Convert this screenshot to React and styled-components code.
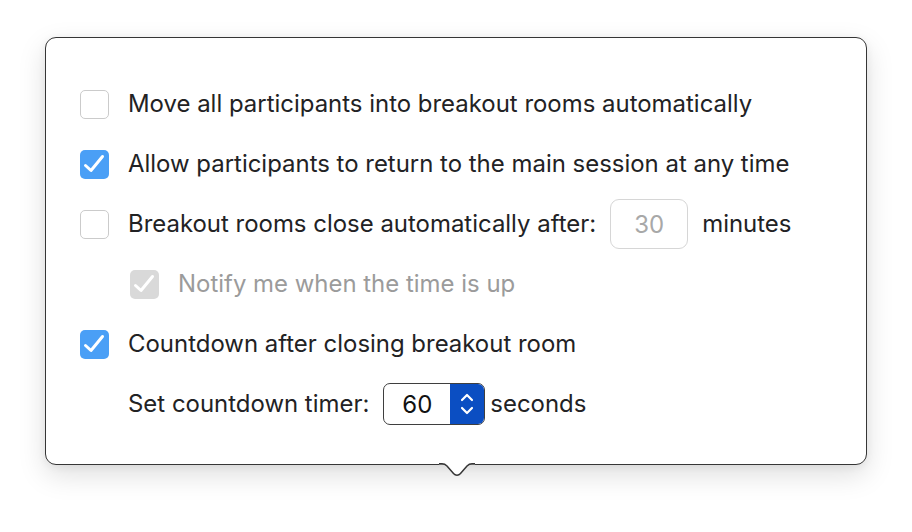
import styled, { createGlobalStyle } from "styled-components";

const Global = createGlobalStyle`
  html, body {
    margin: 0;
    background: #fff;
  }
  body {
    font-family: "Inter", "Noto Sans", sans-serif;
    -webkit-font-smoothing: antialiased;
  }
`;

const Page = styled.div`
  width: 912px;
  height: 532px;
  padding: 37px 0 0 45px;
  box-sizing: border-box;
`;

const Popover = styled.div`
  position: relative;
  width: 822px;
  height: 428px;
  box-sizing: border-box;
  padding: 35px 0 0 34px;
  border: 1.5px solid #363636;
  border-radius: 11px;
  background: #fff;
  box-shadow: 0 10px 28px rgba(0, 0, 0, 0.13), 0 2px 8px rgba(0, 0, 0, 0.06);
`;

const Notch = styled.svg`
  position: absolute;
  left: 393px;
  top: 100%;
  margin-top: -1.5px;
  overflow: visible;
`;

const Row = styled.div`
  display: flex;
  align-items: center;
  height: 60px;
  padding-left: ${(p) => p.$indent || 0}px;
  gap: 19px;
  font-size: 23.95px;
  color: ${(p) => (p.$disabled ? "#9b9b9b" : "#222224")};
`;

const Box = styled.span`
  width: 29px;
  height: 29px;
  margin-top: 2px;
  flex: none;
  box-sizing: border-box;
  border-radius: 5px;
  display: flex;
  background: ${(p) => (p.$disabled ? "#d9d9d9" : p.$checked ? "#4a9ff6" : "#fff")};
  border: ${(p) => (p.$checked || p.$disabled ? "none" : "1.5px solid #cbcbcb")};
`;

const Inline = styled.span`
  display: flex;
  align-items: center;
  gap: 14px;
`;

const Field = styled.span`
  width: 78px;
  height: 50px;
  margin-top: 2px;
  box-sizing: border-box;
  border: 1.5px solid #d6d6d6;
  border-radius: 9px;
  display: flex;
  align-items: center;
  justify-content: center;
  color: #a8a8a8;
`;

const Stepper = styled.span`
  width: 102px;
  height: 42px;
  margin-top: 2px;
  box-sizing: border-box;
  border: 1.5px solid #3f3f3f;
  border-radius: 7px;
  display: flex;
  overflow: hidden;
  color: #111;
  font-size: 24px;
`;

const StepValue = styled.span`
  flex: 1;
  display: flex;
  align-items: center;
  justify-content: center;
`;

const StepArrows = styled.span`
  width: 34px;
  background: #0b4ec2;
  display: flex;
  align-items: center;
  justify-content: center;
`;

const Unit = styled.span`
  margin-left: -14px;
`;

const Check = () => (
  <svg width="29" height="29" viewBox="0 0 29 29">
    <path d="M5.5 15.5 L11 20.5 L22.5 6.5" fill="none" stroke="#fff" strokeWidth="3" strokeLinecap="round" strokeLinejoin="round" />
  </svg>
);

function CheckRow({ checked, disabled, indent, children }) {
  return (
    <Row $disabled={disabled} $indent={indent}>
      <Box $checked={checked} $disabled={disabled}>
        {(checked || disabled) && <Check />}
      </Box>
      {children}
    </Row>
  );
}

export default function App() {
  return (
    <Page>
      <Global />
      <Popover>
        <CheckRow>Move all participants into breakout rooms automatically</CheckRow>
        <CheckRow checked>Allow participants to return to the main session at any time</CheckRow>
        <CheckRow>
          <Inline>
            Breakout rooms close automatically after:
            <Field>30</Field>
            minutes
          </Inline>
        </CheckRow>
        <CheckRow disabled indent={50}>Notify me when the time is up</CheckRow>
        <CheckRow checked>Countdown after closing breakout room</CheckRow>
        <Row $indent={48}>
          <Inline>
            Set countdown timer:
            <Stepper>
              <StepValue>60</StepValue>
              <StepArrows>
                <svg width="16" height="26" viewBox="0 0 16 26">
                  <path d="M3 9 L8 4 L13 9 M3 17 L8 22 L13 17" fill="none" stroke="#fff" strokeWidth="2.2" strokeLinecap="round" strokeLinejoin="round" />
                </svg>
              </StepArrows>
            </Stepper>
          </Inline>
          <Unit>seconds</Unit>
        </Row>
        <Notch width="36" height="14" viewBox="0 0 36 14">
          <rect x="0" y="-2" width="36" height="3.5" fill="#fff" />
          <path d="M0 0.75 H3 C5 0.75 6.5 1.5 8 3 L14.5 10.5 C16.5 12.7 19.5 12.7 21.5 10.5 L28 3 C29.5 1.5 31 0.75 33 0.75 H36" fill="#fff" stroke="#363636" strokeWidth="1.5" />
        </Notch>
      </Popover>
    </Page>
  );
}
